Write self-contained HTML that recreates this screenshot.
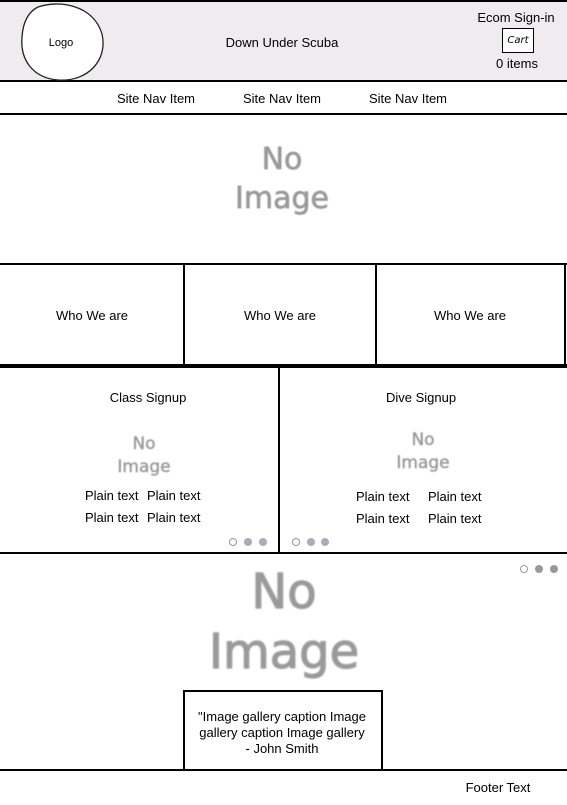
<!DOCTYPE html>
<html><head><style>
*{margin:0;padding:0;box-sizing:border-box}
body{width:567px;height:805px;position:relative;background:#fff;font-family:"Liberation Sans",Arial,sans-serif;font-size:13px;color:#000;overflow:hidden}
.a{position:absolute}
.h{position:absolute;background:#000;height:2px}
.v{position:absolute;background:#000;width:2px}
.t{position:absolute;white-space:nowrap;transform:translateX(-50%)}
.ni{position:absolute;transform:translateX(-50%);text-align:center;font-family:"DejaVu Sans",sans-serif;color:#9a9a9a;-webkit-text-stroke:0.7px #9a9a9a;filter:blur(.4px)}
.dot{position:absolute;width:8px;height:8px;border-radius:50%;background:#a9adb8}
.dot.o{background:#fff;border:1px solid #999}
</style></head><body>
<div class="a" style="left:0;top:2px;width:567px;height:79px;background:#efebef"></div>
<div class="h" style="left:0;top:0;width:567px"></div>
<div class="h" style="left:0;top:80px;width:567px"></div>
<div class="h" style="left:0;top:113px;width:567px"></div>
<svg class="a" style="left:18px;top:2px" width="88" height="80"><path d="M20 5 C40 -2 75 2 84 32 C90 58 70 80 40 78 C15 76 2 58 4 35 C5 20 10 10 20 5 Z" fill="#fff" stroke="#222" stroke-width="1.3"/></svg>
<div class="t" style="left:61px;top:37px;font-size:11px">Logo</div>
<div class="t" style="left:282px;top:35px">Down Under Scuba</div>
<div class="t" style="left:516px;top:10px">Ecom Sign-in</div>
<div class="a" style="left:502px;top:28px;width:32px;height:25px;border:1px solid #000;background:#fff;font-family:'Comic Sans MS','DejaVu Sans',cursive;font-style:italic;font-size:10px;text-align:center;line-height:23px">Cart</div>
<div class="t" style="left:517px;top:56px">0 items</div>
<div class="t" style="left:156px;top:91px">Site Nav Item</div>
<div class="t" style="left:282px;top:91px">Site Nav Item</div>
<div class="t" style="left:408px;top:91px">Site Nav Item</div>
<div class="ni" style="left:282px;top:140px;font-size:30px;line-height:39px">No<br>Image</div>
<div class="h" style="left:0;top:263px;width:567px"></div>
<div class="v" style="left:183px;top:263px;height:103px"></div>
<div class="v" style="left:375px;top:263px;height:103px"></div>
<div class="v" style="left:564px;top:263px;height:103px"></div>
<div class="a" style="left:0;top:364px;width:567px;height:4px;background:#000"></div>
<div class="t" style="left:92px;top:308px">Who We are</div>
<div class="t" style="left:280px;top:308px">Who We are</div>
<div class="t" style="left:470px;top:308px">Who We are</div>
<div class="v" style="left:278px;top:366px;height:188px"></div>
<div class="h" style="left:0;top:552px;width:567px"></div>
<div class="t" style="left:148px;top:390px">Class Signup</div>
<div class="t" style="left:421px;top:390px">Dive Signup</div>
<div class="ni" style="left:144px;top:433px;font-size:17px;line-height:23px;-webkit-text-stroke:0.4px #9a9a9a">No<br>Image</div>
<div class="ni" style="left:423px;top:429px;font-size:17px;line-height:23px;-webkit-text-stroke:0.4px #9a9a9a">No<br>Image</div>
<div class="a" style="left:85px;top:488px">Plain text</div>
<div class="a" style="left:147px;top:488px">Plain text</div>
<div class="a" style="left:85px;top:510px">Plain text</div>
<div class="a" style="left:147px;top:510px">Plain text</div>
<div class="a" style="left:356px;top:489px">Plain text</div>
<div class="a" style="left:428px;top:489px">Plain text</div>
<div class="a" style="left:356px;top:511px">Plain text</div>
<div class="a" style="left:428px;top:511px">Plain text</div>
<div class="dot o" style="left:229px;top:538px"></div><div class="dot" style="left:244px;top:538px"></div><div class="dot" style="left:259px;top:538px"></div>
<div class="dot o" style="left:292px;top:538px"></div><div class="dot" style="left:307px;top:538px"></div><div class="dot" style="left:321px;top:538px"></div>
<div class="dot o" style="left:520px;top:565px;background:#fff"></div><div class="dot" style="left:535px;top:565px;background:#999"></div><div class="dot" style="left:550px;top:565px;background:#999"></div>
<div class="ni" style="left:284px;top:562px;font-size:48px;line-height:60px;-webkit-text-stroke:1.2px #9a9a9a;filter:blur(.8px)">No<br>Image</div>
<div class="a" style="left:183px;top:690px;width:200px;height:81px;border:2px solid #000;background:#fff"></div>
<div class="t" style="left:282px;top:709px;text-align:center;line-height:16px">"Image gallery caption Image<br>gallery caption Image gallery<br>- John Smith</div>
<div class="h" style="left:0;top:769px;width:567px"></div>
<div class="t" style="left:498px;top:780px">Footer Text</div>
</body></html>
